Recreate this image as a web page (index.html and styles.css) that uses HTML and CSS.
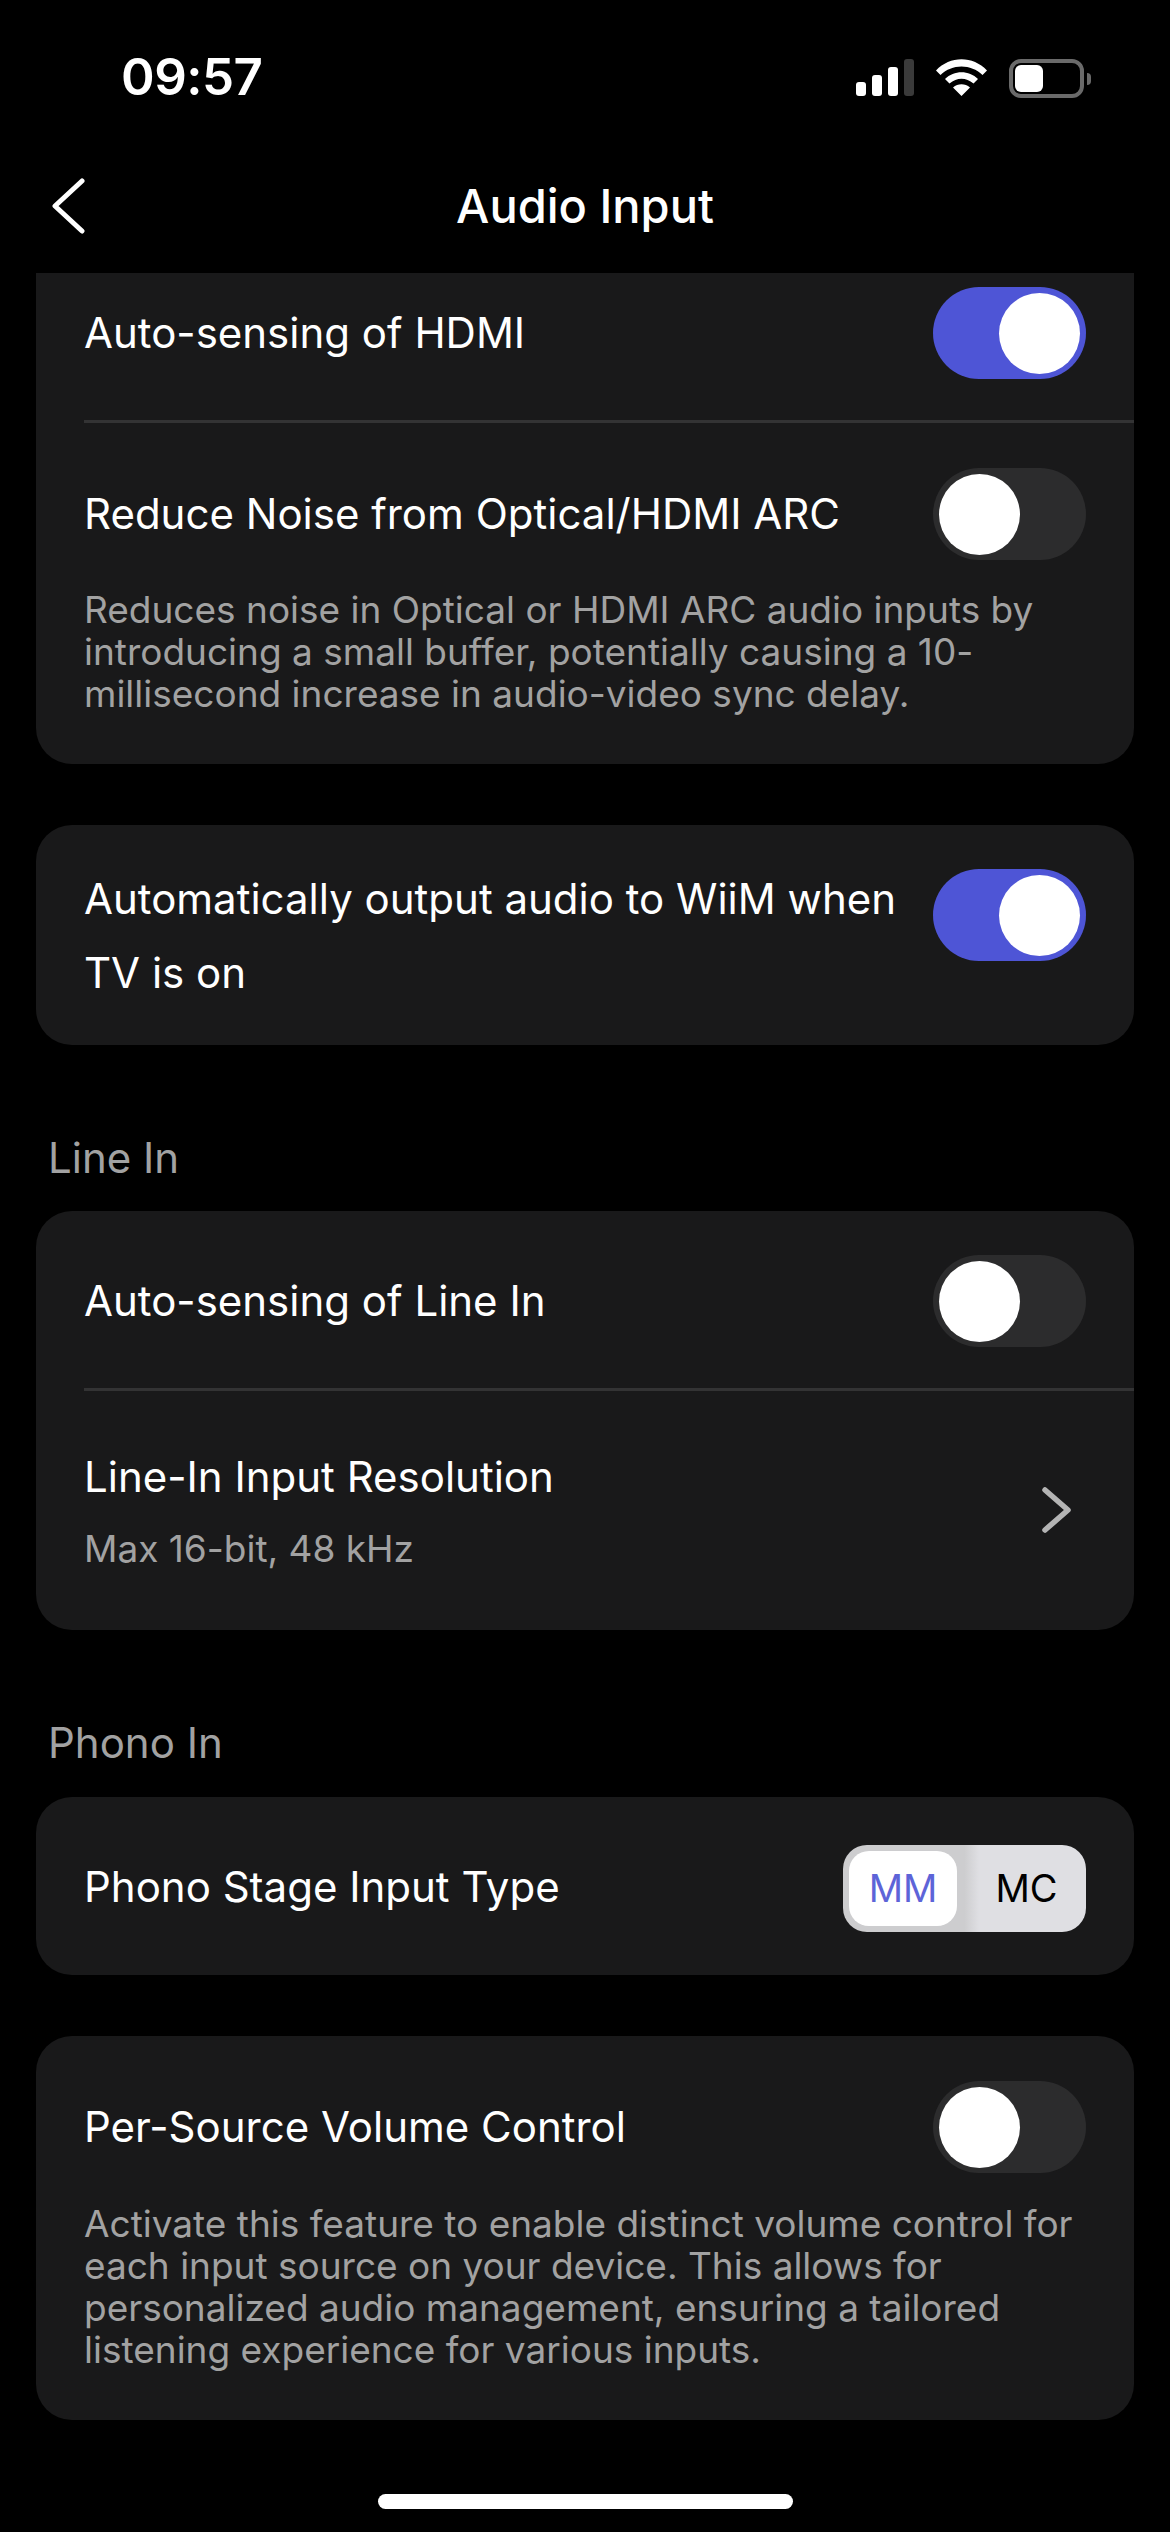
FILE: index.html
```html
<!DOCTYPE html>
<html lang="en">
<head>
<meta charset="utf-8">
<title>Audio Input</title>
<link rel="stylesheet" href="styles.css">
</head>
<body>
<div class="page">
  <div class="status">
    <span class="time">09:57</span>
    <div class="status-icons">
      <div class="signal"><i class="b1"></i><i class="b2"></i><i class="b3"></i><i class="b4"></i></div>
      <svg class="wifi" width="51" height="37" viewBox="0 0 51 37"><path d="M0 11.5 C14 -3.5 37 -3.5 51 11.5 L46.5 16 C35 4.500 16 4.500 4.500 16 Z M9 20 C18 11 33 11 42 20 L37.500 24.500 C30 18 21 18 13.500 24.500 Z M17 28.500 C22 24.200 29 24.200 34 28.500 L25.500 37 Z" fill="#fff"/></svg>
      <div class="battery"><div class="battery-body"><div class="battery-fill"></div></div><div class="battery-nub"></div></div>
    </div>
  </div>
  <header class="nav">
    <svg class="back" width="36" height="56" viewBox="0 0 36 56"><path d="M32 3 L5 28 L32 53" fill="none" stroke="#fff" stroke-width="5" stroke-linecap="round" stroke-linejoin="round"/></svg>
    <h1 class="title">Audio Input</h1>
  </header>

  <section class="card card-clipped">
    <div class="row row-first">
      <span class="label">Auto-sensing of HDMI</span>
      <div class="toggle on"><div class="knob"></div></div>
    </div>
    <div class="sep"></div>
    <div class="row row-noise">
      <span class="label">Reduce Noise from Optical/HDMI ARC</span>
      <div class="toggle"><div class="knob"></div></div>
    </div>
    <p class="desc desc-noise">Reduces noise in Optical or HDMI ARC audio inputs by introducing a small buffer, potentially causing a 10-millisecond increase in audio-video sync delay.</p>
  </section>

  <section class="card card-auto">
    <div class="row row-auto">
      <span class="label label-wrap">Automatically output audio to WiiM when TV is on</span>
      <div class="toggle on toggle-auto"><div class="knob"></div></div>
    </div>
  </section>

  <h2 class="section-title section-line">Line In</h2>
  <section class="card">
    <div class="row row-linein">
      <span class="label">Auto-sensing of Line In</span>
      <div class="toggle"><div class="knob"></div></div>
    </div>
    <div class="sep"></div>
    <div class="row row-res">
      <div class="stack">
        <span class="label">Line-In Input Resolution</span>
        <span class="sub">Max 16-bit, 48 kHz</span>
      </div>
      <svg class="chev" width="33" height="48" viewBox="0 0 33 48"><path d="M5 4 L28 24 L5 44" fill="none" stroke="#b4b4b4" stroke-width="5.500" stroke-linecap="round" stroke-linejoin="round"/></svg>
    </div>
  </section>

  <h2 class="section-title section-phono">Phono In</h2>
  <section class="card">
    <div class="row row-phono">
      <span class="label label-phono">Phono Stage Input Type</span>
      <div class="segment">
        <span class="seg-item seg-active">MM</span>
        <span class="seg-item seg-idle">MC</span>
      </div>
    </div>
  </section>

  <section class="card card-volume">
    <div class="row row-volume">
      <span class="label">Per-Source Volume Control</span>
      <div class="toggle"><div class="knob"></div></div>
    </div>
    <p class="desc desc-volume">Activate this feature to enable distinct volume control for each input source on your device. This allows for personalized audio management, ensuring a tailored listening experience for various inputs.</p>
  </section>

  <div class="home-wrap"><div class="home"></div></div>
</div>
</body>
</html>
```
FILE: styles.css
```css
* { box-sizing: border-box; }
html, body { margin: 0; padding: 0; background: #000; }
body { font-family: Inter, "Liberation Sans", sans-serif; color: #fff; }
.page { width: 1170px; height: 2532px; overflow: hidden; display: flex; flex-direction: column; }
.page > * { flex: none; }

.status { height: 150px; padding: 58px 79px 0 121px; display: flex; justify-content: space-between; align-items: flex-start; }
.time { font-size: 51px; font-weight: 600; line-height: 38px; letter-spacing: -0.5px; }
.status-icons { display: flex; align-items: flex-start; gap: 22px; padding-top: 1px; }
.signal { display: flex; align-items: flex-end; gap: 6px; height: 37px; }
.signal i { display: block; width: 10px; background: #fff; border-radius: 3px; }
.signal .b1 { height: 14px; }
.signal .b2 { height: 21px; }
.signal .b3 { height: 29px; }
.signal .b4 { height: 37px; background: #3a3a3a; }
.battery { display: flex; align-items: center; gap: 3px; }
.battery-body { width: 75px; height: 39px; border: 4px solid #6a6a6a; border-radius: 12px; padding: 2px; }
.battery-fill { width: 28px; height: 27px; background: #fff; border-radius: 6px; }
.battery-nub { width: 4px; height: 12px; background: #6a6a6a; border-radius: 0 4px 4px 0; }

.nav { height: 123px; position: relative; display: flex; align-items: center; justify-content: center; padding-bottom: 12px; }
.title { margin: 0; font-size: 47px; font-weight: 500; line-height: 56px; }
.back { position: absolute; left: 50px; top: 28px; }

.card { margin: 0 36px; background: #19191a; border-radius: 36px; display: flex; flex-direction: column; }
.card-clipped { height: 491px; border-radius: 0 0 36px 36px; }
.card-auto { margin-top: 61px; height: 220px; }
.card-volume { margin-top: 61px; height: 384px; }

.row { display: flex; align-items: center; justify-content: space-between; padding: 0 48px 0 48px; }
.row-first { height: 147px; padding-bottom: 27px; }
.row-noise { height: 170px; padding-top: 12px; }
.row-auto { height: 220px; align-items: flex-start; padding-top: 37px; }
.row-linein { height: 177px; padding-top: 3px; padding-bottom: 0; }
.row-res { height: 239px; padding-bottom: 12px; }
.row-phono { height: 178px; padding-top: 4px; }
.row-volume { height: 145px; padding-top: 36px; }

.label { font-size: 42px; line-height: 74px; font-weight: 400; white-space: nowrap; }
.label-wrap { white-space: normal; width: 830px; }
.label-phono { margin-top: -3px; }
.sep { height: 3px; margin-left: 48px; background: #333334; flex: none; }
.desc { margin: 0; padding: 0 48px; font-size: 37px; line-height: 42px; color: #a2a2a2; }
.desc-noise { margin-top: -4px; }
.desc-volume { margin-top: 22px; }

.toggle { width: 153px; height: 92px; border-radius: 46px; background: #2c2c2d; padding: 6px; flex: none; display: flex; }
.toggle.on { background: #4e55d6; justify-content: flex-end; }
.toggle-auto { margin-top: 7px; }
.knob { width: 81px; height: 81px; border-radius: 50%; background: #fff; }

.stack { display: flex; flex-direction: column; }
.sub { font-size: 37px; line-height: 42px; color: #a2a2a2; margin-top: 14px; }
.chev { margin-right: 13px; margin-top: 10px; }

.section-title { margin: 0; padding-left: 48px; font-size: 42px; line-height: 50px; font-weight: 400; color: #a2a2a2; }
.section-line { margin-top: 88px; margin-bottom: 28px; }
.section-phono { margin-top: 88px; margin-bottom: 29px; }

.segment { width: 243px; height: 87px; padding: 6px; border-radius: 24px; background: linear-gradient(90deg, #cdcdcf 0, #cdcdcf 50%, #dfdfe3 56%); display: flex; align-items: stretch; }
.seg-item { flex: none; width: 108px; display: flex; align-items: center; justify-content: center; font-size: 38px; color: #000; }
.seg-idle { width: 123px; padding-left: 16px; }
.seg-active { background: #fff; color: #5d64d8; border-radius: 20px; }

.home-wrap { margin-top: 74px; display: flex; justify-content: center; }
.home { width: 415px; height: 15px; border-radius: 8px; background: #fff; }
```
